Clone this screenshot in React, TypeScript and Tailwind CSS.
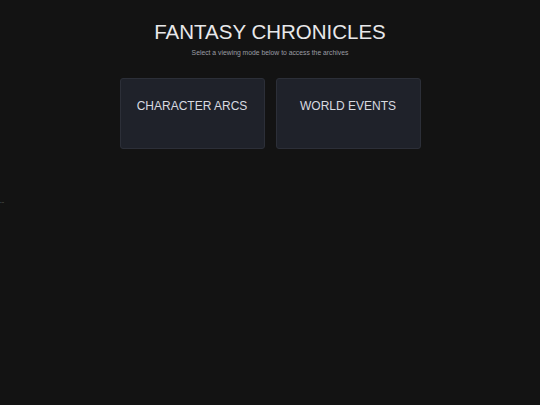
export default function App() {
  const modes = ['CHARACTER ARCS', 'WORLD EVENTS'];
  return (
    <div
      className="min-h-[405px] w-full bg-[#131313] text-[#e5e7eb]"
      style={{ fontFamily: '"Liberation Sans", Arial, sans-serif' }}
    >
      <div className="flex flex-col items-center pt-[20px]">
        <h1 className="m-0 text-[20.5px] leading-[24px] font-normal text-[#e8e8ea]">
          FANTASY CHRONICLES
        </h1>
        <p className="mt-[4px] text-[6.8px] leading-[9px] text-[#9a9ca3]">
          Select a viewing mode below to access the archives
        </p>
        <div className="mt-[21px] flex gap-[11px]">
          {modes.map((m) => (
            <button
              key={m}
              className="flex h-[71px] w-[145px] flex-col items-center rounded-[3px] border border-[#2c2f38] bg-[#1f222a] pt-[20px]"
            >
              <span className="text-[12px] leading-[14px] text-[#d8dae0]">{m}</span>
            </button>
          ))}
        </div>
      </div>
      <div className="mt-[49px] text-[5px] leading-[6px] text-[#a0a0a0]">...</div>
    </div>
  );
}
